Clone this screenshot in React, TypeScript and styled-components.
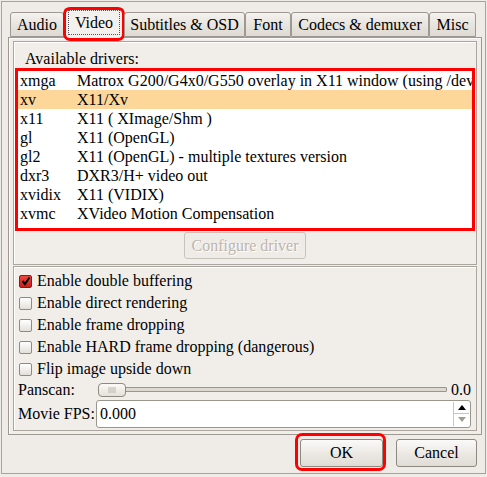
import React, { useState } from 'react';
import styled, { createGlobalStyle } from 'styled-components';

const GlobalStyle = createGlobalStyle`
    html, body {
        margin: 0;
        padding: 0;
        background: #efebe7;
    }
    body {
        font-family: "Liberation Serif", "Times New Roman", serif;
        font-size: 16px;
        color: #000;
    }
    * {
        box-sizing: border-box;
    }
`

const Window = styled.div`
    width: 487px;
    height: 477px;
    padding: 1px 1px 3px 1px;
    background: #efebe7;
`
const Frame = styled.div`
    height: 100%;
    border: 1px solid #a7a39b;
    display: flex;
    flex-direction: column;
    padding: 0 3px 0 4px;
`
const TabBar = styled.div`
    height: 35px;
    display: flex;
    align-items: flex-end;
    padding-left: 4px;
    position: relative;
    z-index: 1;
`
const Tab = styled.div<{ $width: number; $active?: boolean }>`
    position: relative;
    width: ${p => p.$width}px;
    height: ${p => (p.$active ? 30 : 25)}px;
    margin-bottom: ${p => (p.$active ? -1 : 0)}px;
    border: 1px solid #9d9990;
    border-bottom: ${p => (p.$active ? 'none' : '1px solid #9d9990')};
    border-radius: 3px 3px 0 0;
    background: ${p => (p.$active
        ? '#f3f1ee'
        : 'linear-gradient(#f4f2ef, #e6e2dc 60%, #dedad3)')};
    display: flex;
    align-items: ${p => (p.$active ? 'flex-start' : 'center')};
    justify-content: center;
    padding-top: ${p => (p.$active ? 1 : 0)}px;
    line-height: 22px;
    white-space: nowrap;
`
const FocusRing = styled.span`
    border: 1px dotted #555;
    padding: 0 6px;
    line-height: 23px;
`
const Marker = styled.span<{ $inset: string }>`
    position: absolute;
    inset: ${p => p.$inset};
    border: 3px solid #ff0000;
    border-radius: 7px;
    pointer-events: none;
`
const Page = styled.div`
    height: 398px;
    margin-left: 2px;
    border: 1px solid #9d9990;
    box-shadow: inset 1px 1px 0 #fbfaf9;
    background: #f1eeea;
    padding: 3px 4px 3px 4px;
    display: flex;
    flex-direction: column;
    gap: 1px;
`
const Group = styled.div<{ $height: number }>`
    height: ${p => p.$height}px;
    border: 1px solid #aaa69f;
    box-shadow: inset 1px 1px 0 #ffffff;
    display: flex;
    flex-direction: column;
`
const GroupLabel = styled.div`
    padding: 7px 0 0 11px;
    height: 26px;
    line-height: 19px;
`
const DriverList = styled.div`
    margin: 0 1px;
    border: 3px solid #ff0000;
    background: #ffffff;
    padding-bottom: 5px;
`
const DriverRow = styled.div<{ $selected?: boolean }>`
    display: flex;
    height: 19px;
    line-height: 19px;
    padding-left: 2px;
    white-space: nowrap;
    overflow: hidden;
    background: ${p => (p.$selected ? '#fdd79a' : 'transparent')};
`
const DriverName = styled.span`
    width: 57px;
    flex: none;
`
const DriverInfo = styled.span`
    overflow: hidden;
`
const ButtonRow = styled.div<{ $end?: boolean }>`
    display: flex;
    justify-content: ${p => (p.$end ? 'flex-end' : 'center')};
    gap: 13px;
`
const PushButton = styled.button<{ $width: number; $disabled?: boolean }>`
    position: relative;
    width: ${p => p.$width}px;
    height: 28px;
    font: inherit;
    color: ${p => (p.$disabled ? '#bcb6ad' : '#000')};
    text-shadow: ${p => (p.$disabled ? '1px 1px 0 #ffffff' : 'none')};
    border: 1px solid ${p => (p.$disabled ? '#c8c3ba' : '#8e8a82')};
    border-radius: 3px;
    background: ${p => (p.$disabled
        ? '#efebe7'
        : 'linear-gradient(#fbfaf9, #ebe8e3 55%, #e0dcd5)')};
    padding: 0;
`
const ConfigureButton = styled(PushButton)`
    height: 27px;
    margin-top: 1px;
`
const Options = styled.div`
    padding: 3px 5px 0 5px;
    display: flex;
    flex-direction: column;
`
const CheckRow = styled.label`
    display: flex;
    align-items: center;
    gap: 5px;
    height: 22px;
    cursor: default;
`
const Box = styled.span<{ $checked: boolean }>`
    width: 13px;
    height: 13px;
    flex: none;
    border-radius: 2px;
    border: 1px solid ${p => (p.$checked ? '#8a1a14' : '#8e8a84')};
    background: ${p => (p.$checked
        ? 'linear-gradient(#f0463c, #c8201a)'
        : 'linear-gradient(#ffffff, #e3e0da)')};
    display: flex;
    align-items: center;
    justify-content: center;
`
const FieldRow = styled.div<{ $height: number }>`
    display: flex;
    align-items: center;
    height: ${p => p.$height}px;
    padding-left: 0;
    margin-left: -1px;
`
const FieldLabel = styled.span<{ $width: number }>`
    width: ${p => p.$width}px;
    flex: none;
`
const SliderTrack = styled.div`
    flex: 1;
    height: 14px;
    display: flex;
    align-items: center;
    position: relative;
`
const TrackBar = styled.div`
    flex: 1;
    height: 5px;
    border: 1px solid #9a968e;
    border-radius: 1px;
    background: #ddd8d0;
    margin-left: -2px;
`
const Handle = styled.div`
    width: 28px;
    height: 14px;
    flex: none;
    border: 1px solid #8e8a82;
    border-radius: 4px;
    background: linear-gradient(#fbfaf8, #e4e0da);
    display: flex;
    align-items: center;
    justify-content: center;
    position: relative;
    z-index: 1;
`
const Grip = styled.span`
    width: 8px;
    height: 6px;
    background-image: radial-gradient(#b6b1a8 0.6px, transparent 0.8px);
    background-size: 2px 2px;
`
const SliderValue = styled.span`
    width: 24px;
    text-align: right;
    flex: none;
`
const SpinBox = styled.div`
    flex: 1;
    height: 28px;
    display: flex;
    border: 1px solid #9a968e;
    border-radius: 3px;
    background: #ffffff;
    overflow: hidden;
`
const SpinInput = styled.input`
    flex: 1;
    min-width: 0;
    border: none;
    outline: none;
    font: inherit;
    padding: 0 3px;
    background: transparent;
`
const SpinButtons = styled.div`
    width: 16px;
    display: flex;
    flex-direction: column;
    border-left: 1px solid #c9c5be;
    margin: 1px 1px 1px 0;
`
const SpinArrow = styled.div<{ $muted?: boolean }>`
    flex: 1;
    display: flex;
    align-items: center;
    justify-content: center;
    color: ${p => (p.$muted ? '#a09c95' : '#000')};
    & + & {
        border-top: 1px solid #c9c5be;
    }
`
const Footer = styled.div`
    padding: 4px 5px 0 0;
`

const tabs = [
    { title: 'Audio', width: 54 },
    { title: 'Video', width: 60 },
    { title: 'Subtitles & OSD', width: 121 },
    { title: 'Font', width: 46 },
    { title: 'Codecs & demuxer', width: 138 },
    { title: 'Misc', width: 47 },
];

const drivers = [
    ['xmga', 'Matrox G200/G4x0/G550 overlay in X11 window (using /dev/mga_vid)'],
    ['xv', 'X11/Xv'],
    ['x11', 'X11 ( XImage/Shm )'],
    ['gl', 'X11 (OpenGL)'],
    ['gl2', 'X11 (OpenGL) - multiple textures version'],
    ['dxr3', 'DXR3/H+ video out'],
    ['xvidix', 'X11 (VIDIX)'],
    ['xvmc', 'XVideo Motion Compensation'],
];

const options = [
    'Enable double buffering',
    'Enable direct rendering',
    'Enable frame dropping',
    'Enable HARD frame dropping (dangerous)',
    'Flip image upside down',
];

const Check = () => (
    <svg width="10" height="10" viewBox="0 0 10 10">
        <path d="M1.5 5 L4 8 L8.5 1.5" fill="none" stroke="#000" strokeWidth="2" />
    </svg>
);

const Arrow = ({ down }: { down?: boolean }) => (
    <svg width="8" height="5" viewBox="0 0 8 5">
        <path d={down ? 'M0 0 H8 L4 5 Z' : 'M0 5 H8 L4 0 Z'} fill="currentColor" />
    </svg>
);

const App: React.FC = () => {
    const [activeTab] = useState(1);
    const [selected, setSelected] = useState(1);
    const [checked, setChecked] = useState([true, false, false, false, false]);
    const [fps, setFps] = useState('0.000');

    const toggle = (i: number) => {
        setChecked(prev => prev.map((v, j) => (j === i ? !v : v)));
    };

    return (
        <Window>
            <GlobalStyle />
            <Frame>
                <TabBar>
                    {tabs.map((t, i) => (
                        <Tab key={t.title} $width={t.width} $active={i === activeTab}>
                            {i === activeTab ? <FocusRing>{t.title}</FocusRing> : t.title}
                            {i === activeTab && <Marker $inset="-2px -2px -3px -2px" />}
                        </Tab>
                    ))}
                </TabBar>
                <Page>
                    <Group $height={224}>
                        <GroupLabel>Available drivers:</GroupLabel>
                        <DriverList>
                            {drivers.map(([name, info], i) => (
                                <DriverRow
                                    key={name}
                                    $selected={i === selected}
                                    onClick={() => setSelected(i)}
                                >
                                    <DriverName>{name}</DriverName>
                                    <DriverInfo>{info}</DriverInfo>
                                </DriverRow>
                            ))}
                        </DriverList>
                        <ButtonRow>
                            <ConfigureButton $width={122} $disabled disabled>
                                Configure driver
                            </ConfigureButton>
                        </ButtonRow>
                    </Group>
                    <Group $height={165}>
                        <Options>
                            {options.map((text, i) => (
                                <CheckRow key={text} onClick={() => toggle(i)}>
                                    <Box $checked={checked[i]}>{checked[i] && <Check />}</Box>
                                    {text}
                                </CheckRow>
                            ))}
                            <FieldRow $height={19}>
                                <FieldLabel $width={80}>Panscan:</FieldLabel>
                                <SliderTrack>
                                    <Handle><Grip /></Handle>
                                    <TrackBar />
                                </SliderTrack>
                                <SliderValue>0.0</SliderValue>
                            </FieldRow>
                            <FieldRow $height={29}>
                                <FieldLabel $width={78}>Movie FPS:</FieldLabel>
                                <SpinBox>
                                    <SpinInput value={fps} onChange={e => setFps(e.target.value)} />
                                    <SpinButtons>
                                        <SpinArrow><Arrow /></SpinArrow>
                                        <SpinArrow $muted><Arrow down /></SpinArrow>
                                    </SpinButtons>
                                </SpinBox>
                            </FieldRow>
                        </Options>
                    </Group>
                </Page>
                <Footer>
                    <ButtonRow $end>
                        <PushButton $width={83}>
                            OK
                            <Marker $inset="-7px -4px -5px -6px" />
                        </PushButton>
                        <PushButton $width={81}>Cancel</PushButton>
                    </ButtonRow>
                </Footer>
            </Frame>
        </Window>
    );
};

export default App;
